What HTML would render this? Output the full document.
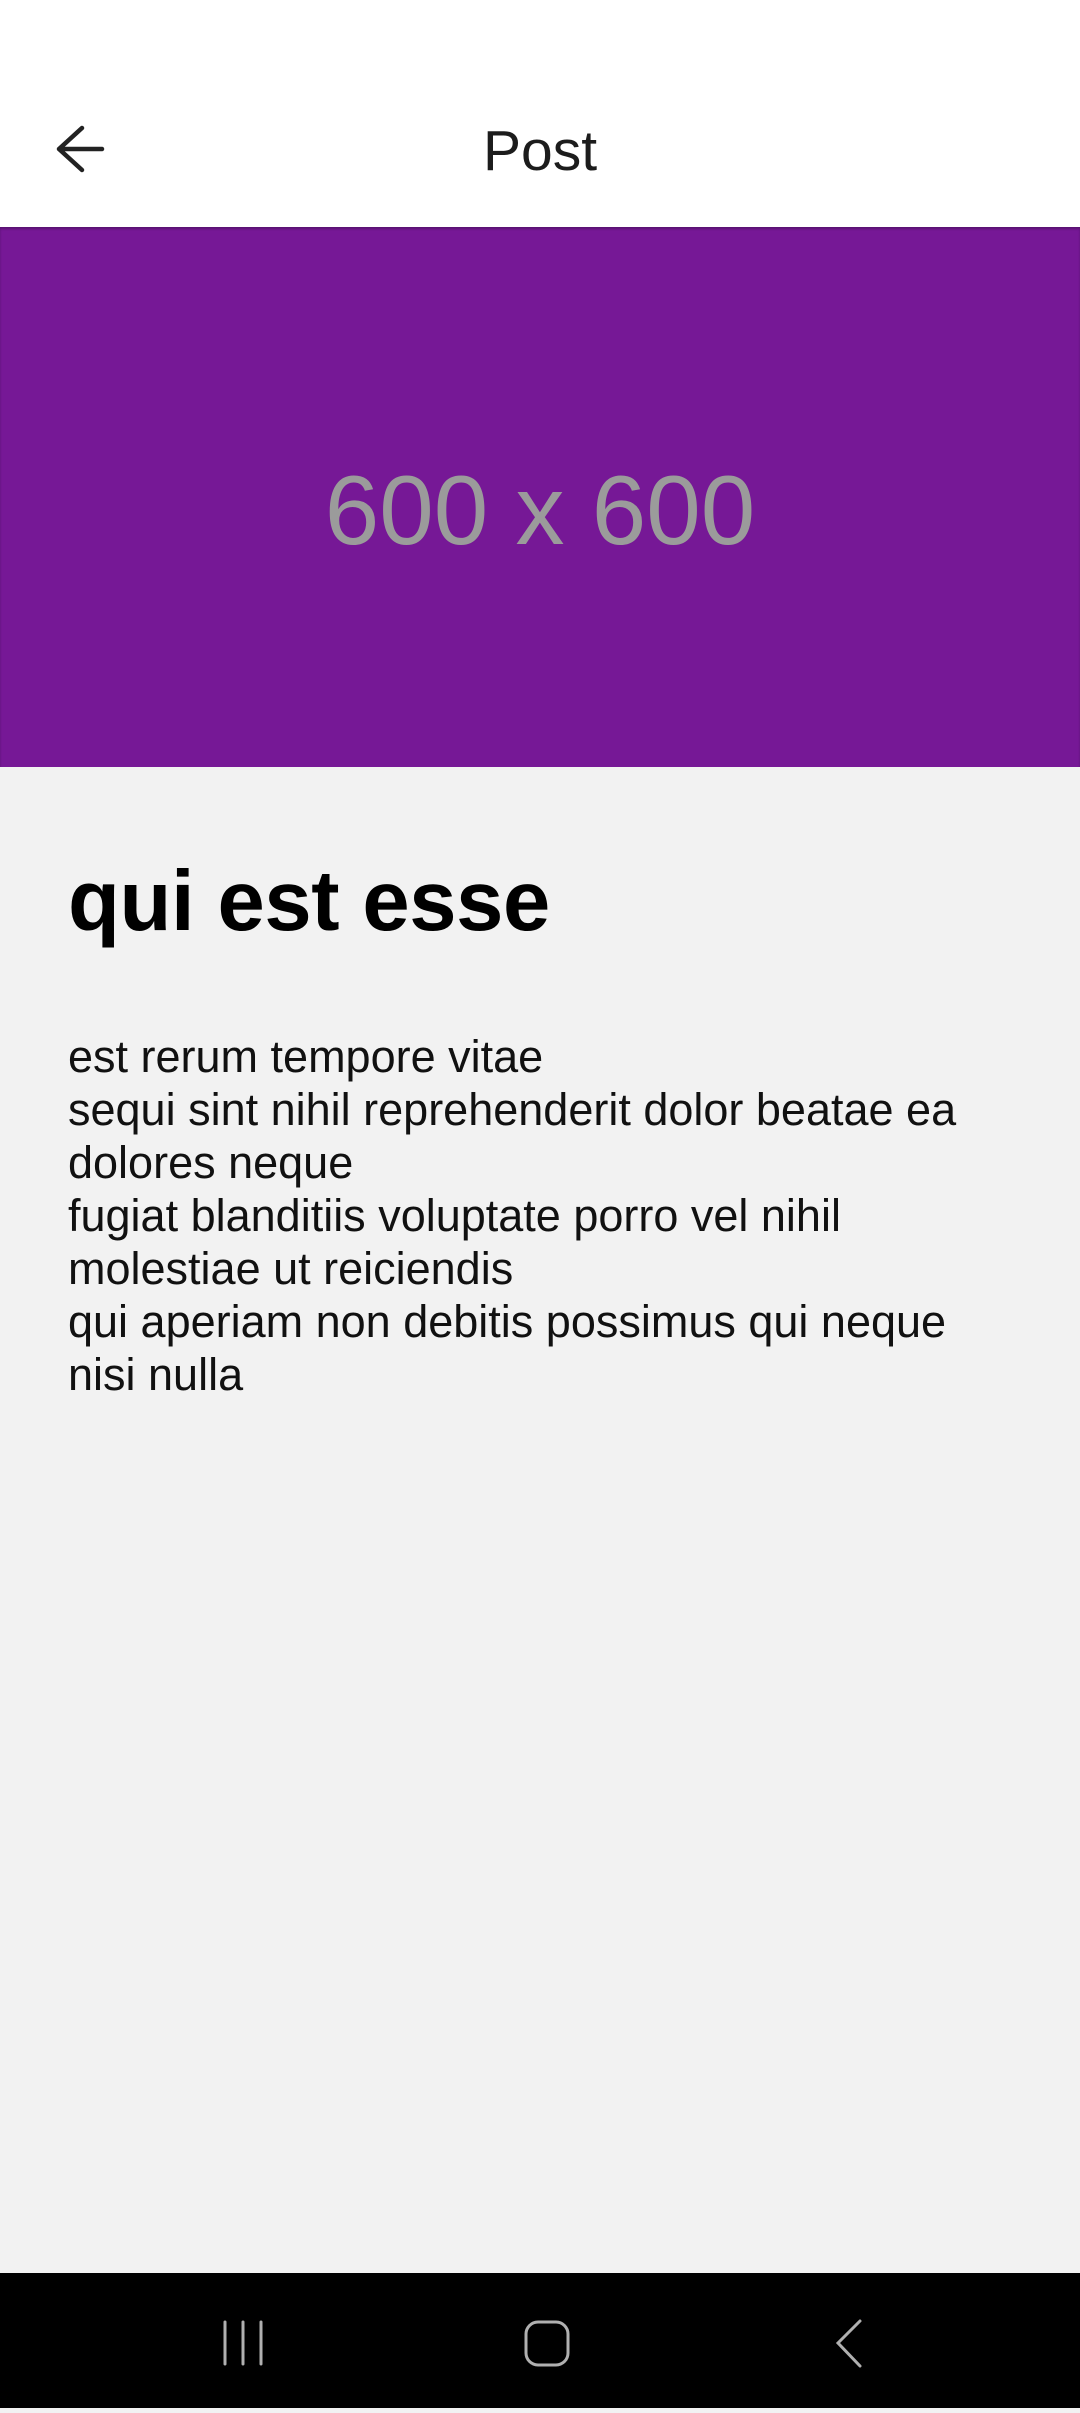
<!DOCTYPE html>
<html><head><meta charset="utf-8"><style>
html,body{margin:0;padding:0}
body{width:1080px;height:2408px;position:relative;background:#f2f2f2;overflow:hidden;font-family:"Liberation Sans",sans-serif}
.hdr{position:absolute;left:0;top:0;width:1080px;height:227px;background:#fff}
.title{position:absolute;left:0;width:1080px;text-align:center;top:116px;font-size:57px;line-height:70px;color:#1c1c1c}
.img{position:absolute;left:0;top:227px;width:1080px;height:540px;background:#761896;box-shadow:inset 0 2px 2px rgba(0,0,0,.25)}
.ph{position:absolute;left:0;width:1080px;text-align:center;top:450px;font-size:98px;line-height:120px;color:#9b9b9b}
h1{position:absolute;left:68px;top:852px;margin:0;font-size:85px;line-height:100px;font-weight:bold;color:#000;letter-spacing:-0.4px}
.body{position:absolute;left:68px;top:1030px;width:1000px;font-size:45px;line-height:53px;color:#111}
.nav{position:absolute;left:0;top:2273px;width:1080px;height:135px;background:#000}
</style></head><body>
<div class="hdr">
<svg style="position:absolute;left:0;top:0" width="140" height="227"><path d="M102 149H59M82 128L59 149L82 170" fill="none" stroke="#222" stroke-width="4.5" stroke-linecap="round" stroke-linejoin="round"/></svg>
<div class="title">Post</div>
</div>
<div class="img"></div>
<div class="ph">600 x 600</div>
<h1>qui est esse</h1>
<div class="body">est rerum tempore vitae<br>sequi sint nihil reprehenderit dolor beatae ea<br>dolores neque<br>fugiat blanditiis voluptate porro vel nihil<br>molestiae ut reiciendis<br>qui aperiam non debitis possimus qui neque<br>nisi nulla</div>
<div class="nav">
<svg width="1080" height="135">
<g stroke="#b0b0b0" stroke-width="3" fill="none" stroke-linecap="round">
<path d="M225 49V91M243 49V91M261 49V91"/>
<rect x="526" y="49" width="42" height="43" rx="12"/>
<path d="M860 48L838 70L860 93"/>
</g>
</svg>
</div>
</body></html>
